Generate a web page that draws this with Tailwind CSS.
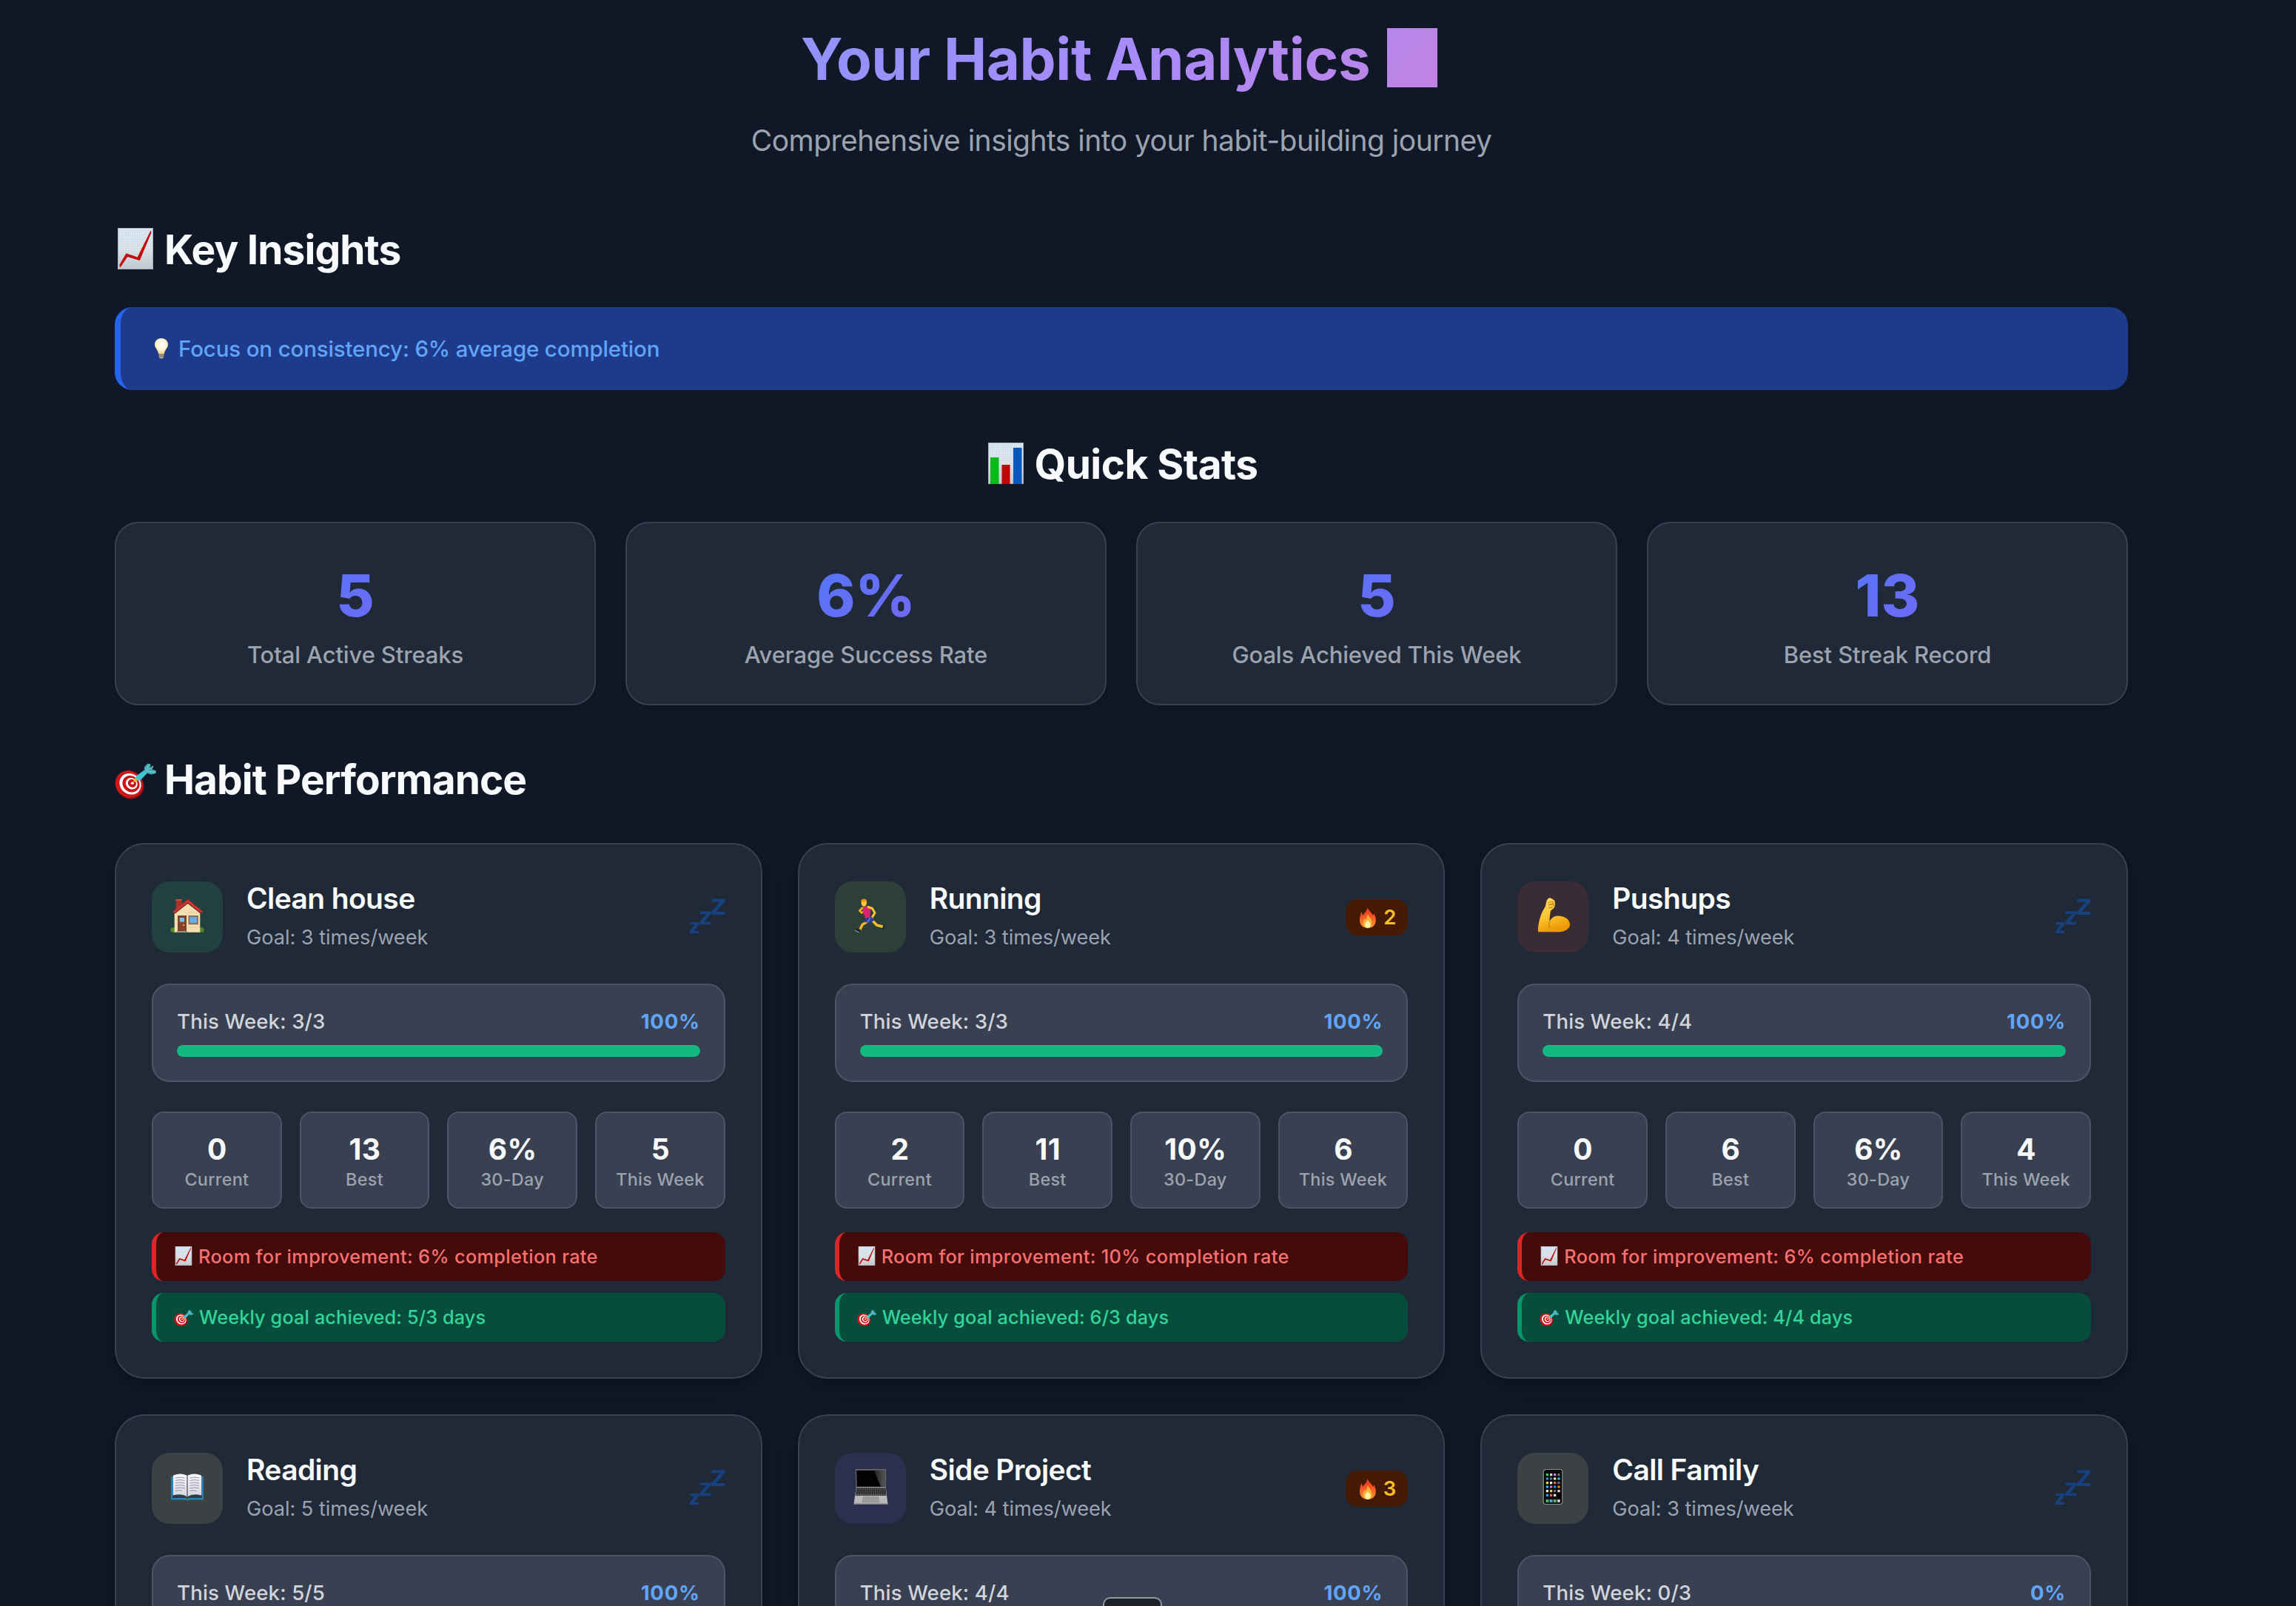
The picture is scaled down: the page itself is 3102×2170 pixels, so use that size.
<!DOCTYPE html>
<html lang="en">
<head>
<meta charset="utf-8">
<title>Your Habit Analytics</title>
<script src="https://cdn.jsdelivr.net/npm/@tailwindcss/browser@4"></script>
</head>
<body class="h-[2170px] overflow-hidden bg-[#101827] font-['Inter',sans-serif] text-gray-50">

<svg class="absolute h-0 w-0" aria-hidden="true">
  <defs>
    <linearGradient id="paper" x1="0" y1="0" x2="0" y2="1"><stop offset="0" stop-color="#dce9f4"/><stop offset=".5" stop-color="#dfe6ea"/><stop offset="1" stop-color="#c3c9cc"/></linearGradient>
    <pattern id="grid" width="3" height="3" patternUnits="userSpaceOnUse"><path d="M0 0H3M0 0V3" stroke="#a9c3d8" stroke-width=".6" fill="none"/></pattern>
    <linearGradient id="skin" x1="0" y1="0" x2=".3" y2="1"><stop offset="0" stop-color="#ffdc6b"/><stop offset=".6" stop-color="#fdc42f"/><stop offset="1" stop-color="#eb9a06"/></linearGradient>
    <linearGradient id="fire" x1="0" y1="0" x2="0" y2="1"><stop offset="0" stop-color="#e8331c"/><stop offset=".55" stop-color="#f6602a"/><stop offset="1" stop-color="#fb9a2c"/></linearGradient>
    <radialGradient id="glow" cx=".5" cy=".4" r=".6"><stop offset="0" stop-color="#ffffff"/><stop offset=".6" stop-color="#fff6d2"/><stop offset="1" stop-color="#f3cf7a"/></radialGradient>
    <linearGradient id="screen" x1="0" y1="0" x2="1" y2="0"><stop offset="0" stop-color="#222"/><stop offset="1" stop-color="#555"/></linearGradient>
    <linearGradient id="page" x1="0" y1="0" x2="0" y2="1"><stop offset="0" stop-color="#f7f7fb"/><stop offset="1" stop-color="#d5d6e2"/></linearGradient>
  </defs>
  <symbol id="chart" viewBox="0 0 56 56">
    <rect x="4" width="48" height="56" fill="url(#paper)"/><rect x="4" width="48" height="56" fill="url(#grid)" opacity=".7"/>
    <rect x="4.5" y=".5" width="47" height="55" fill="none" stroke="#a9b0b5"/>
    <path d="M6.300 50 15.500 34.300 30.700 39.500 48.600 3.500 49.600 6 33.800 44 17.200 39 7.400 53.600Z" fill="#c40606"/>
  </symbol>
  <symbol id="bars" viewBox="0 0 56 56">
    <rect x="4" width="48" height="56" fill="url(#paper)"/><rect x="4" width="48" height="56" fill="url(#grid)" opacity=".7"/>
    <rect x="4.5" y=".5" width="47" height="55" fill="none" stroke="#a9b0b5"/>
    <path d="M7 20h11.5v36H7z" fill="#08bb1b"/><path d="M22.5 30h11v26h-11z" fill="#c00505"/><path d="M38 7h11.5v49H38z" fill="#0558be"/>
  </symbol>
  <symbol id="target" viewBox="0 0 56 56">
    <ellipse cx="20.5" cy="36" rx="19.5" ry="18" transform="rotate(38 20.5 36)" fill="#8f0d10"/>
    <ellipse cx="19.5" cy="34.5" rx="19.3" ry="17.8" transform="rotate(38 19.5 34.5)" fill="#d0161a"/>
    <ellipse cx="21" cy="34.3" rx="15.2" ry="13.6" transform="rotate(38 21 34.3)" fill="#fff"/>
    <ellipse cx="22" cy="34.2" rx="12" ry="10.8" transform="rotate(38 22 34.2)" fill="#c91418"/>
    <ellipse cx="22.8" cy="33.8" rx="8.4" ry="7.4" transform="rotate(38 22.8 33.8)" fill="#fff"/>
    <ellipse cx="23.4" cy="33.5" rx="5.8" ry="5.2" transform="rotate(38 23.4 33.5)" fill="#c91418"/>
    <ellipse cx="23.8" cy="33.2" rx="2" ry="1.800" fill="#fff"/>
    <path d="M24 32.500 28 25.500 32 29Z" fill="#f2b51d"/>
    <path d="M28.500 24 42.500 13.500 46 17.500 34 30 29.500 28.500Z" fill="#3fc5d3"/>
    <path d="M40 17 40 11.500 44.500 6.500 48.500 7.500 48 13.500 51 9.500 52.500 10.500 50.500 14.500 56 16.500 55.500 20 49 21.500 43.500 19.500Z" fill="#46a9b4"/>
    <path d="M42 16.500 46.500 8.500M43.500 17.500 55 18.500M43 17 51 11" stroke="#7fdbe3" stroke-width=".9" fill="none"/>
  </symbol>
  <symbol id="bulb" viewBox="0 0 30 30">
    <path d="M15 1c5.200 0 9 3.700 9 8.600 0 4.900-4.200 6.600-5.100 12.400h-7.800C10.200 16.200 6 14.500 6 9.600 6 4.700 9.800 1 15 1Z" fill="url(#glow)"/>
    <path d="M11.300 22h7.400l-.6 5-1.600 1.500h-3l-1.600-1.500Z" fill="#a5a08f"/><path d="M11.500 23.500h7M11.800 25.500h6.400" stroke="#6f6c63" stroke-width=".8"/>
  </symbol>
  <symbol id="house" viewBox="0 0 48 48">
    <circle cx="5" cy="41.500" r="3.600" fill="#4d8a1f"/><circle cx="43" cy="41.500" r="3.600" fill="#4d8a1f"/>
    <path d="M8.700 0h8v13h-8z" fill="#a8322c"/><path d="M8.700 0h8v2h-8z" fill="#c94a41"/>
    <path d="M6.700 16.500 24.700 2.500 41.300 16.500V44.700H6.700Z" fill="#f6deb2"/>
    <path d="M7 27H23M7 33H11M23 38H41M25 18H41" stroke="#e6c690" stroke-width=".8"/>
    <path d="M24.700 0 45 16.800 43.200 18.600 24.700 4 6 18.600 4.500 16.800Z" fill="#d4302b"/>
    <path d="M24.700 4 43.200 18.600 42 19.400 24.700 6 7.500 19.400 6 18.600Z" fill="#7f1f1d"/>
    <path d="M11 22h12v22H11z" fill="#6e4a36"/><path d="M12.600 23.800h8.800V43h-8.800z" fill="#8a4226"/><path d="M13.800 25h6.200v5.600h-6.200z" fill="#7dbdee"/><circle cx="19.200" cy="35" r="1" fill="#ffd34d"/>
    <path d="M25.500 22h13.300v12.200H25.500z" fill="#8c6a52"/><path d="M27.300 23.800h9.700v8.400h-9.700z" fill="#68aee4"/><path d="M10 43h14v2H10z" fill="#9b9388"/>
  </symbol>
  <symbol id="runner" viewBox="0 0 48 48" overflow="visible">
    <path d="M14 11 9.300 15.500 12 18.500 17 14.500" fill="none" stroke="#f2b01c" stroke-width="2.600" stroke-linejoin="round"/>
    <path d="M20 30 13 34.500 9.500 42" fill="none" stroke="#f6b520" stroke-width="3.400" stroke-linejoin="round"/>
    <path d="M26 28 32.500 35 42 37.500" fill="none" stroke="#f9bf2a" stroke-width="3.400" stroke-linejoin="round"/>
    <path d="M14 10.500 19.500 9.500 24 13.500 23.500 25 17.500 26.500 13.500 17Z" fill="#d8246f"/>
    <path d="M21 10.500 26.500 12.500 30 18.500 26 25" fill="none" stroke="#fbc536" stroke-width="3" stroke-linejoin="round" stroke-linecap="round"/>
    <path d="M17.500 25.500 26 24 29 28.500 24.500 32 16 31Z" fill="#2e3f9c"/><path d="M20 31 23.500 25" stroke="#8fa0e6" stroke-width="1"/>
    <ellipse cx="15.300" cy="5" rx="3.700" ry="4.800" fill="#fcc838"/><path d="M11.200 3.500c0-3 2-4.300 4.500-4s4 2.500 3.600 6l-1.700-2.300Z" fill="#e09a14"/>
    <path d="M3 40 10.500 40.500 11 42.500 8.800 45 3.500 42Z" fill="#20283a"/><path d="M41.500 34.500 44 34.500 43.500 39 41 42 39.800 40Z" fill="#20283a"/><path d="M3 42 8.500 45" stroke="#cfd6e4" stroke-width=".8"/>
  </symbol>
  <symbol id="biceps" viewBox="0 0 48 48" overflow="visible">
    <path d="M14.500 7C15 3 16 0 18.500-1.500c2-.8 3.500.3 5 1.500 2 .8 3.200 2 3.300 4.500.2 3.500 0 6-2 8-1.500 1.800-3.600 2-4 4-.6 3.500-1.300 9-1.300 13.500C22 25 26 22.500 31 22.500c9 0 16 5 16 11.500 0 7-8 10.300-17 10.300H4C3.500 38 5.500 26 9.500 17.500 11 14 14 11 14.500 7Z" fill="url(#skin)"/>
    <path d="M19.500 30c-1.500 4-.5 7 .5 8.500M17.500 4.500l5-1.500M18.500 7.500l5-1M24 3.500l1 5M19 11c2 1 4 .5 5-1" stroke="#c98208" stroke-width="1.300" fill="none" stroke-linecap="round"/>
  </symbol>
  <symbol id="book" viewBox="0 0 48 48">
    <path d="M2.200 8h43.600v31.500H27l-3 1-3-1H2.200Z" fill="#2a86b9"/>
    <path d="M4 33.500C12 31.500 19 32 24 36c5-4 12-4.500 20-2.500v3.500H4Z" fill="#343a42"/>
    <path d="M5 6.500C12 3.500 19 3.800 24 7c5-3.200 12-3.500 19-.5V33.500C36 31.500 29 32 24 35.500 19 32 12 31.500 5 33.500Z" fill="url(#page)"/>
    <path d="M24 7v28" stroke="#70717d" stroke-width="1.600"/>
    <path d="M8 10q6-2 12.500 0M8 13.500q6-2 12.500 0M8 17q6-2 12.500 0M8 20.500q6-2 12.500 0M8 24q6-2 12.500 0M8 27.500q6-2 9 0M27.500 10q6.500-2 12.500 0M27.500 13.500q6.500-2 12.500 0M27.500 17q6.500-2 12.500 0M27.500 20.500q6.500-2 12.500 0M27.500 24q6.500-2 12.500 0M27.500 27.500q4-1.500 9 0" stroke="#8c8d99" stroke-width=".9" fill="none"/>
    <circle cx="24" cy="37" r="1.800" fill="#5b4a12"/>
  </symbol>
  <symbol id="laptop" viewBox="0 0 48 48" overflow="visible">
    <path d="M3.800-2H45.200L44.800 22.500H4.600Z" fill="#6c6c6e"/><path d="M5-.2H43.800L43.400 21.800H5.800Z" fill="#020202"/><path d="M29-.2H43.800L43.400 21.800H38Z" fill="url(#screen)"/>
    <path d="M4.600 22.500H44.800L47.500 45.500H1.500Z" fill="#b9b9bb"/><path d="M4.800 23.500H44.500L45.600 33.800H3.700Z" fill="#1b1b1c"/>
    <path d="M5 25.300H44.500M4.800 27.800H44.800M4.500 30.300H45.200M4.300 32.500H45.400" stroke="#858588" stroke-width="1" stroke-dasharray="2 .8"/>
    <path d="M13.800 35H35.200L36.500 43.500H12.300Z" fill="#9a9a9c"/><path d="M1.500 44.500H47.500V46H1.500Z" fill="#77777a"/>
  </symbol>
  <symbol id="phone" viewBox="0 0 48 48" overflow="visible">
    <rect x="11.200" y="-1.500" width="25.600" height="47" rx="3.500" fill="#050505" stroke="#8d8d8f" stroke-width="1.200"/>
    <rect x="14" y="38.500" width="20" height="5" rx="1" fill="#3a3d44"/>
    <g stroke-width="3.200" fill="none">
      <path d="M14.800 5.700h3.200M14.800 41h3.200" stroke="#3ad15a"/><path d="M20 5.700h3.200M30.400 27.700h3.200" stroke="#d9dde2"/><path d="M25.100 5.700h3.200M20 22h3.200" stroke="#d67be0"/><path d="M30.400 5.700h3.200M20 11h3.200M25.100 27.700h3.200M30.400 16.700h3.200" stroke="#6d7076"/>
      <path d="M14.800 11h3.200M25.100 22h3.200M14.800 33.300h3.200" stroke="#259ef5"/><path d="M25.100 11h3.200M20 16.700h3.200M14.800 27.700h3.200M25.100 33.300h3.200M30.400 41h3.200" stroke="#eef0ee"/><path d="M30.400 11h3.200M14.800 22h3.200M20 41h3.200" stroke="#36c8ee"/>
      <path d="M14.800 16.700h3.200M20 27.700h3.200" stroke="#ecd53f"/><path d="M25.100 16.700h3.200M20 33.300h3.200" stroke="#ef6257"/><path d="M30.400 22h3.200" stroke="#f98b14"/><path d="M25.100 41h3.200" stroke="#4bd964"/>
    </g>
  </symbol>
  <symbol id="sleep" viewBox="0 0 48 48">
    <path fill="#17407f" d="M29.500 .5H47.500V4.300L35.500 18H47.500V22H29V18.200L41 4.500H29.500ZM13.800 17.300H28.500V20.700L19.300 31.500H28.500V35.200H13.300V31.800L22.500 21H13.800ZM.3 32H12.300V35L5.600 43.800H12.300V47H0V44L6.800 35.200H.3Z"/>
  </symbol>
  <symbol id="flame" viewBox="0 0 28 28">
    <path d="M13.500 0c1 4 6 7 7.500 11 .8-.8 1-1.800 1-2.700 2 3 2.800 6 2.800 9.200C24.800 24 20 28 14 28S3 24 3 17.500c0-4.500 1.200-8 2.200-11.500 1 1.500 1.500 3.500 1.700 5.200C8.500 8.500 12.500 6 13.500 0Z" fill="url(#fire)"/>
    <path d="M14 8.500c.5 4 5.500 6.500 5.500 12 0 4.500-2.500 7.300-5.500 7.300s-6.500-2.800-6.500-6.800c0-3 1.500-4.500 2.500-6.500 .5 1 1 1.500 1.500 2 .5-2.500 2-4.500 2.500-8Z" fill="#fcb337"/>
    <path d="M14 17c1 2 3.800 3.500 3.800 6.500 0 2.700-1.600 4.300-3.800 4.300s-4-1.600-4-4.300c0-2.500 2.500-4 4-6.500Z" fill="#fff3a8"/>
  </symbol>
</svg>

<main class="ml-[155px] flex h-[2170px] w-[2720px] flex-col overflow-visible pt-8">
  <header class="flex flex-col items-stretch">
    <h1 class="flex h-24 items-center justify-center gap-[23px] bg-[linear-gradient(135deg,#60a5fa,#a78bfa,#f472b6)] bg-clip-text pr-[6px] text-[78px] leading-none font-bold tracking-[-0.0053em] text-transparent"><span>Your Habit Analytics</span><span class="-mt-1 h-20 w-[68px] bg-linear-to-br from-[#b787ec] to-[#c181e2]"></span></h1>
    <p class="mt-[38px] text-center text-[39px] leading-[48px] tracking-[-0.0136em] text-[#9ca3af]">Comprehensive insights into your habit-building journey</p>
  </header>

  <section class="mt-[91px]">
    <h2 class="flex h-16 items-center gap-[11px] text-[55px] leading-none font-bold tracking-[-0.0165em] text-[#f9fafb]"><svg class="-mt-[2px] size-14"><use href="#chart"/></svg>Key Insights</h2>
    <div class="mt-[46px] flex h-28 items-center gap-[8px] rounded-[24px] border-l-8 border-[#2563eb] bg-[#1e3a8a] pl-10 text-[29.5px] font-medium tracking-[-0.0055em] text-[#60a5fa]"><svg class="size-[30px]"><use href="#bulb"/></svg>Focus on consistency: 6% average completion</div>
  </section>

  <section class="mt-[68px]">
    <h2 class="flex h-16 items-center justify-center gap-[11px] text-[55px] leading-none font-bold tracking-[-0.0101em] text-[#f9fafb]"><svg class="-mt-[2px] size-14"><use href="#bars"/></svg>Quick Stats</h2>
    <div id="stats" class="mt-[46px] grid grid-cols-4 gap-10"></div>
  </section>

  <section class="mt-[68px]">
    <h2 class="flex h-16 items-center gap-[11px] text-[55px] leading-none font-bold tracking-[-0.018em] text-[#f9fafb]"><svg class="size-14"><use href="#target"/></svg>Habit Performance</h2>
    <div id="habits" class="mt-[54px] grid grid-cols-3 gap-12"></div>
  </section>
</main>

<!-- floating pill at the lower edge -->
<div class="absolute top-[2158px] left-[1490px] h-3 w-20 rounded-t-[10px] border-2 border-b-0 border-[#97999e] bg-[#1b2029]"></div>

<script>
const stats = [["5", "Total Active Streaks"], ["6%", "Average Success Rate"], ["5", "Goals Achieved This Week"], ["13", "Best Streak Record"]];
document.getElementById("stats").innerHTML = stats.map(([value, label]) => `
  <div class="flex h-[248px] flex-col rounded-[32px] border-2 border-[#374151] bg-[#202937] p-12 text-center shadow-[0_4px_12px_rgba(0,0,0,0.15)]">
    <div class="h-[98px] bg-[linear-gradient(135deg,#3b82f6,#8b5cf6)] bg-clip-text text-[79px] leading-[98px] font-extrabold text-transparent">${value}</div>
    <div class="mt-3 text-[31px] leading-[40px] font-medium tracking-[-0.004em] text-[#9ca3af]">${label}</div>
  </div>`).join("");

const habits = [
  { name: "Clean house", goal: 3, icon: "house", tile: "bg-[#234040]", week: "3/3", pct: 100, nums: ["0", "13", "6%", "5"], done: "5/3" },
  { name: "Running", goal: 3, icon: "runner", tile: "bg-[#2d3f37]", streak: 2, week: "3/3", pct: 100, nums: ["2", "11", "10%", "6"], done: "6/3" },
  { name: "Pushups", goal: 4, icon: "biceps", tile: "bg-[#3a2c35]", week: "4/4", pct: 100, nums: ["0", "6", "6%", "4"], done: "4/4" },
  { name: "Reading", goal: 5, icon: "book", tile: "bg-[#3c4144]", week: "5/5", pct: 100 },
  { name: "Side Project", goal: 4, icon: "laptop", tile: "bg-[#2c2f4f]", streak: 3, week: "4/4", pct: 100 },
  { name: "Call Family", goal: 3, icon: "phone", tile: "bg-[#3c4144]", week: "0/3", pct: 0 },
];
const labels = ["Current", "Best", "30-Day", "This Week"];
document.getElementById("habits").innerHTML = habits.map(h => `
  <article class="flex flex-col ${h.nums ? "h-[724px] rounded-[40px] border-2 p-12" : "h-[259px] overflow-hidden rounded-t-[40px] border-2 border-b-0 px-12 pt-12"} border-[#374151] bg-[#202937] shadow-[0_8px_24px_rgba(0,0,0,0.3)]">
    <div class="flex h-[100px] shrink-0 items-center gap-8">
      <div class="flex size-24 items-center justify-center rounded-[24px] ${h.tile}"><svg class="size-12 overflow-visible"><use href="#${h.icon}"/></svg></div>
      <div class="flex-1 pb-px">
        <h3 class="text-[39px] leading-[48px] font-semibold tracking-[-0.016em] text-[#f9fafb]">${h.name}</h3>
        <p class="mt-[9px] text-[27.2px] leading-[40px] tracking-[-0.002em] text-[#9ca3af]">Goal: ${h.goal} times/week</p>
      </div>
      ${h.streak
        ? `<div class="mt-px flex h-[49px] items-center gap-[7px] rounded-[16px] bg-[#451a03] px-4 text-[27.5px] leading-none font-semibold text-[#fbbf24]"><svg class="size-7"><use href="#flame"/></svg>${h.streak}</div>`
        : `<svg class="-mt-[2px] size-12"><use href="#sleep"/></svg>`}
    </div>
    <div class="mt-10 h-[133px] shrink-0 rounded-[24px] border-2 border-[#4b5563] bg-[#394051] p-8">
      <div class="flex h-[33px] items-center justify-between pt-[2px] text-[27.6px] leading-none">
        <span class="font-medium tracking-[0.005em] text-[#d1d5db]">This Week: ${h.week}</span>
        <span class="font-bold tracking-[0.025em] text-[#60a5fa]">${h.pct}%</span>
      </div>
      <div class="mt-4 h-4 overflow-hidden rounded-lg bg-[#4b5563]"><div class="h-full rounded-lg bg-[#12b981]" style="width:${h.pct}%"></div></div>
    </div>
    ${h.nums ? `
    <div class="mt-10 grid shrink-0 grid-cols-4 gap-6">
      ${h.nums.map((n, i) => `
      <div class="h-[131px] rounded-[16px] border-2 border-[#4b5563] bg-[#394051] pt-6 text-center whitespace-nowrap">
        <div class="pl-px text-[39px] leading-[50px] font-bold tracking-[0.01em] text-[#f9fafb]">${n}</div>
        <div class="text-[23.4px] leading-[31px] font-medium tracking-[0.012em] text-[#9ca3af]">${labels[i]}</div>
      </div>`).join("")}
    </div>
    <div class="mt-8 flex flex-col gap-4 text-[25.3px] font-medium">
      <div class="flex h-[66px] items-center gap-[7px] rounded-[16px] border-l-[6px] border-[#dc2626] bg-[#450a0a] pl-6 tracking-[0.0135em] text-[#f87171]"><svg class="-mt-[2px] size-[26px]"><use href="#chart"/></svg>Room for improvement: ${h.nums[2]} completion rate</div>
      <div class="flex h-[66px] items-center gap-[8px] rounded-[16px] border-l-[6px] border-[#059669] bg-[#064e3b] pl-6 tracking-[0.0046em] text-[#34d399]"><svg class="size-[26px]"><use href="#target"/></svg>Weekly goal achieved: ${h.done} days</div>
    </div>` : ""}
  </article>`).join("");
</script>
</body>
</html>
